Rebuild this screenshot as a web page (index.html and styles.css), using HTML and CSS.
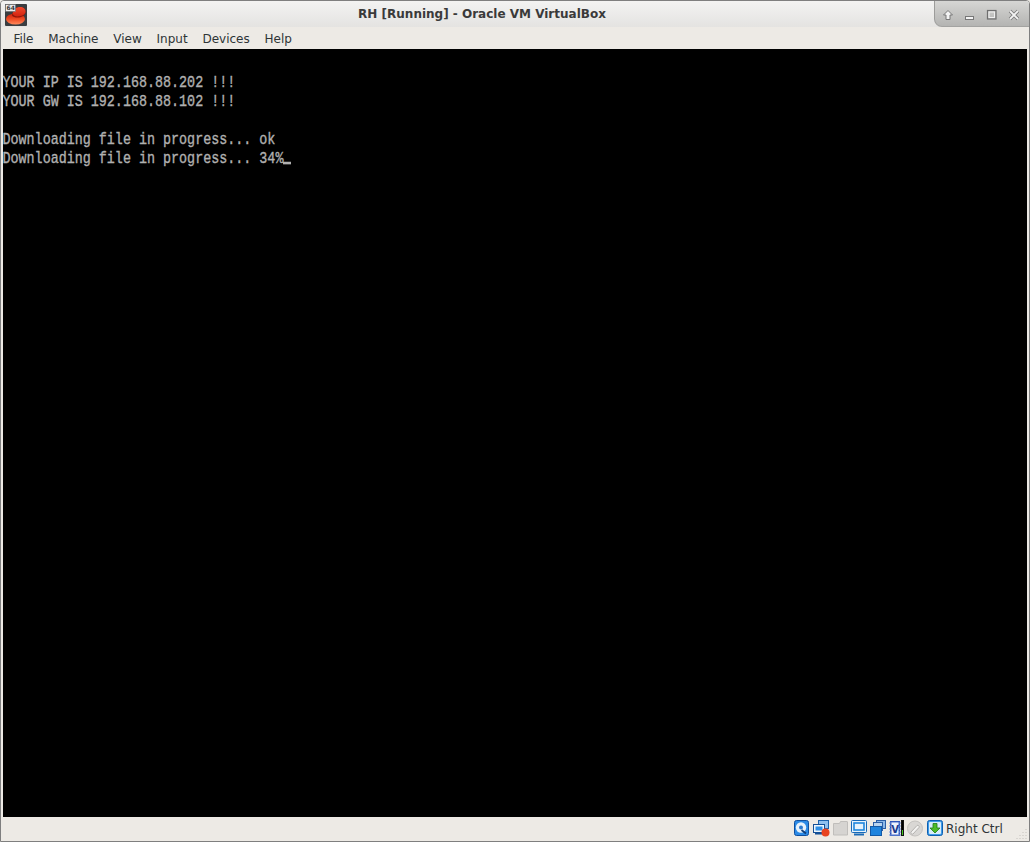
FILE: index.html
```html
<!DOCTYPE html>
<html lang="en">
<head>
<meta charset="utf-8">
<title>RH [Running] - Oracle VM VirtualBox</title>
<link rel="stylesheet" href="styles.css">
</head>
<body>
<div class="window">
  <header class="titlebar">
    <svg class="app-icon" width="22" height="22" viewBox="0 0 22 22">
      <defs>
        <linearGradient id="brim" x1="0" y1="0" x2="0" y2="1"><stop offset="0" stop-color="#c9200e"/><stop offset=".5" stop-color="#ee4a22"/><stop offset="1" stop-color="#ff8a5c"/></linearGradient>
        <linearGradient id="dome" x1="0" y1="0" x2="0" y2="1"><stop offset="0" stop-color="#f04a2c"/><stop offset="1" stop-color="#d3230f"/></linearGradient>
      </defs>
      <rect width="22" height="22" rx="1" fill="#3a3d40"/>
      <ellipse cx="10.500" cy="15" rx="9.500" ry="5.500" fill="url(#brim)"/>
      <path d="M7 11.500C8 6 11 3 15 3c3.500 0 5.500 2 5.500 5 0 3-3 5-6.500 5.500-3 .4-6-.4-7-2z" fill="#8f1608"/>
      <path d="M7.500 9.500C9 5 11.500 3 15 3c3.500 0 5.500 2 5.500 4.500 0 2.500-3 4.300-6.500 4.800-3 .4-5.500-.6-6.500-2.800z" fill="url(#dome)"/>
      <rect x=".5" y=".5" width="10" height="7" fill="#ececec" stroke="#666" stroke-width=".6"/>
      <text class="badge" x="1.500" y="6.300">64</text>
    </svg>
    <div class="title">RH [Running] - Oracle VM VirtualBox</div>
    <div class="controls">
      <svg width="12" height="12" viewBox="0 0 12 12"><path d="M6 1.500 10.500 6H8v4.500H4V6H1.500z" fill="#f3f3f3" stroke="#777"/></svg>
      <svg width="12" height="12" viewBox="0 0 12 12"><rect x="1.500" y="7.500" width="8" height="3" fill="#f3f3f3" stroke="#777"/></svg>
      <svg width="12" height="12" viewBox="0 0 12 12"><rect x="1.500" y="1.500" width="8.500" height="8.500" fill="none" stroke="#6f6f6f" stroke-width="1.200"/><rect x="3" y="3" width="5.500" height="5.500" fill="none" stroke="#f0f0f0"/></svg>
      <svg width="12" height="12" viewBox="0 0 12 12"><path d="M2 2 10 10M10 2 2 10" stroke="#777" stroke-width="3.400"/><path d="M2 2 10 10M10 2 2 10" stroke="#f3f3f3" stroke-width="1.800"/></svg>
    </div>
  </header>
  <nav class="menubar">
    <span class="menu">File</span>
    <span class="menu">Machine</span>
    <span class="menu">View</span>
    <span class="menu">Input</span>
    <span class="menu">Devices</span>
    <span class="menu">Help</span>
  </nav>
  <main class="screen"><div class="console"><div class="line">&nbsp;</div><div class="line">YOUR IP IS 192.168.88.202 !!!</div><div class="line">YOUR GW IS 192.168.88.102 !!!</div><div class="line">&nbsp;</div><div class="line">Downloading file in progress... ok</div><div class="line">Downloading file in progress... 34%<span class="cursor"></span></div></div></main>
  <footer class="statusbar">
    <svg width="16" height="16" viewBox="0 0 16 16"><rect x=".5" y=".5" width="14" height="15" rx="2" fill="#2b8ae6" stroke="#0f4f9e"/><circle cx="7" cy="7.500" r="5.200" fill="#e6f1fb"/><circle cx="7" cy="7.500" r="2" fill="#2b7ad0"/><path d="M7.500 10 12 13.500" stroke="#123d78" stroke-width="1.800"/></svg>
    <svg width="17" height="17" viewBox="0 0 17 17"><rect x="5.500" y=".5" width="10" height="8" fill="#8fc0ee" stroke="#1c62ad"/><rect x=".5" y="4.500" width="11" height="8" fill="#eef6fd" stroke="#134f96"/><rect x="2.500" y="6.500" width="7" height="4" fill="#2f8fe6"/><rect x="2" y="13" width="8" height="1.500" fill="#134f96"/><circle cx="12.500" cy="12.500" r="4" fill="#e8431f"/></svg>
    <svg width="15" height="16" viewBox="0 0 15 16"><path d="M.5 3.500h6l1-2h6.500a.5.500 0 0 1 .5.500v13H.5z" fill="#d6d4d1" stroke="#c0bebb"/></svg>
    <svg width="16" height="16" viewBox="0 0 16 16"><rect x=".5" y=".5" width="15" height="12" rx="1" fill="#e5f2fc" stroke="#1669b8"/><rect x="3" y="3" width="10" height="7" fill="#e5f2fc" stroke="#1f86dc" stroke-width="1.600"/><rect x="3" y="13.500" width="10" height="2" fill="#1c6cb8"/></svg>
    <svg width="16" height="16" viewBox="0 0 16 16"><rect x="6.500" y=".5" width="9" height="8" fill="#8bb8e8" stroke="#2a5ea6"/><rect x="3.500" y="2.500" width="9" height="8" fill="#b8d4f0" stroke="#2a5ea6"/><rect x=".5" y="6.500" width="11" height="9" fill="#1f84de" stroke="#125aa8"/></svg>
    <div class="vt-group">
      <svg width="12" height="17" viewBox="0 0 12 17"><path d="M1 1h10v15H1z" fill="#2f55b8"/><path d="M0 3h12M0 6h12M0 9h12M0 12h12M0 15h12" stroke="#6f8fdc"/><rect x="2.500" y="2.500" width="7" height="12" fill="#eef2fc"/><text class="vt" x="2.200" y="12.500">V</text></svg>
      <div class="cpu"><span class="cpu-fill"></span></div>
    </div>
    <svg width="17" height="17" viewBox="0 0 17 17"><circle cx="8" cy="8.500" r="7.500" fill="#d9d7d4" stroke="#c4c2bf"/><path d="M4 12 10 5.500c1-1 3 1 2 2L6 14c-1 1-3-1-2-2z" fill="#f3f2f0" stroke="#b4b2af"/></svg>
    <svg width="16" height="16" viewBox="0 0 16 16"><rect x=".5" y=".5" width="15" height="15" rx="2" fill="#3d9be8" stroke="#0f5fb0"/><rect x="2" y="2" width="12" height="12" rx="1" fill="#d7ecfb"/><path d="M8 13 3 8h3V3.500h4V8h3z" fill="#4cbb28" stroke="#1f7a14" stroke-width=".8"/></svg>
    <span class="hostkey">Right Ctrl</span>
    <svg class="grip" width="12" height="12" viewBox="0 0 12 12"><path d="M10 1v1M7 4v1M10 4v1M4 7v1M7 7v1M10 7v1M1 10v1M4 10v1M7 10v1M10 10v1" stroke="#c4c1bc"/></svg>
  </footer>
</div>
</body>
</html>
```
FILE: styles.css
```css
* { box-sizing: border-box; }
html, body { margin: 0; padding: 0; background: #edeae5; }
body { width: 1030px; height: 842px; overflow: hidden; font-family: "DejaVu Sans", sans-serif; font-size: 12px; color: #2e3436; }
.window { width: 1030px; height: 842px; display: flex; flex-direction: column; border: 1px solid #7f7f7f; border-radius: 4px 4px 0 0; overflow: hidden; background: #edeae5; }
.titlebar { flex: 0 0 26px; display: flex; align-items: flex-start; padding-left: 4px; background: linear-gradient(#f3f3f2, #e4e3e1); }
.app-icon { flex: none; margin-top: 3px; }
.badge { font-family: "DejaVu Sans", sans-serif; font-size: 6px; font-weight: 700; fill: #333; }
.title { flex: 1; text-align: center; font-weight: 700; font-size: 12px; padding: 1px 0 0 3px; line-height: 25px; color: #3a3a3a; }
.controls { flex: none; width: 95px; height: 26px; padding: 8px 0 0 7px; display: flex; gap: 10px; background: linear-gradient(#d6d6d4, #b4b4b2); border-left: 1px solid #9c9c9a; border-bottom: 1px solid #a3a3a1; border-bottom-left-radius: 8px; }
.menubar { flex: 0 0 22px; display: flex; padding: 2px 0 0 5px; background: #edeae5; align-items: center; }
.menu { padding: 0 7.400px; line-height: 20px; color: #2e3436; }
.screen { flex: 1; margin: 0 2px; background: #000; overflow: hidden; }
.console { padding-top: 4.500px; font-family: "Liberation Mono", monospace; font-size: 13.380px; line-height: 19px; color: #b0b0b0; -webkit-text-stroke: .3px #b0b0b0; }
.line { height: 19px; margin-left: -.5px; white-space: pre; transform: scaleY(1.3); }
.cursor { display: inline-block; width: 8px; height: 2px; margin-left: -.5px; background: #b0b0b0; vertical-align: -1px; }
.statusbar { flex: 0 0 24px; display: flex; gap: 3px; align-items: flex-start; padding: 3px 0 0 793px; position: relative; background: #edeae5; }
.vt-group { display: flex; gap: 0; }
.vt { font-family: "DejaVu Sans", sans-serif; font-size: 10px; font-weight: 700; fill: #1b3a8c; }
.cpu { width: 3px; height: 16px; background: #000; border: 1px solid #111; display: flex; align-items: flex-end; }
.cpu-fill { display: block; width: 100%; height: 5px; background: #46c81e; }
.hostkey { line-height: 18px; color: #2e3436; }
.grip { position: absolute; right: 1px; bottom: 1px; }
```
